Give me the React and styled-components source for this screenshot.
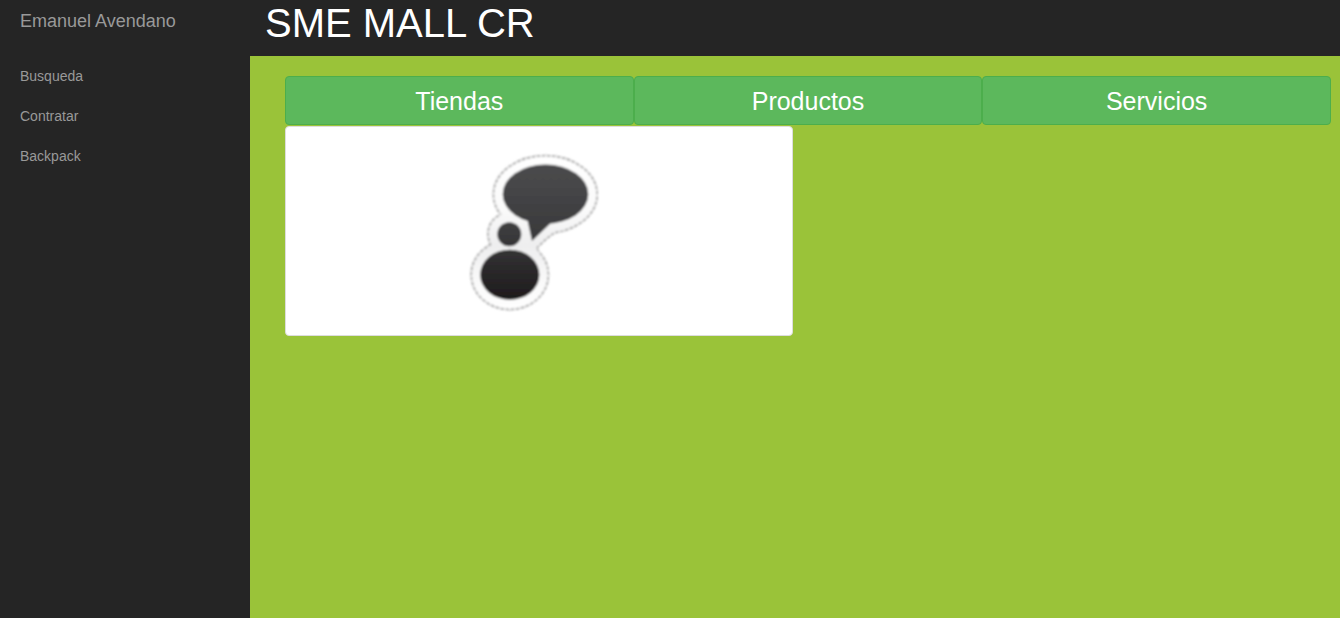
import React from "react";
import styled, { createGlobalStyle } from "styled-components";

const GlobalStyle = createGlobalStyle`
  *, *::before, *::after { box-sizing: border-box; }
  body {
    margin: 0;
    background: #9ac339;
    font-family: "Liberation Sans", Arial, sans-serif;
    font-size: 14px;
    line-height: 20px;
  }
`;

const Layout = styled.div`
  display: flex;
  min-height: 100vh;
`;

const Sidebar = styled.nav`
  flex: 0 0 250px;
  background: #252525;
`;

const SidebarLink = styled.a`
  display: block;
  padding-left: 20px;
  line-height: 40px;
  color: #999;
  text-decoration: none;
`;

const Brand = styled(SidebarLink)`
  height: 56px;
  font-size: 18px;
  line-height: 42px;
`;

const Menu = styled.ul`
  margin: 0;
  padding: 0;
  list-style: none;
`;

const Main = styled.div`
  flex: 1;
  min-width: 0;
`;

const Header = styled.header`
  height: 56px;
  padding: 0 15px;
  background: #252525;
`;

const Title = styled.h1`
  margin: 0;
  color: #fff;
  font-size: 40px;
  font-weight: 400;
  line-height: 46px;
`;

const Content = styled.main`
  padding: 20px 9px 20px 35px;
`;

const Categories = styled.div`
  display: grid;
  grid-template-columns: repeat(3, 1fr);
`;

const CategoryButton = styled.button`
  height: 49px;
  padding: 0 12px;
  border: 1px solid #4cae4c;
  border-radius: 4px;
  background: #5cb85c;
  color: #fff;
  font-family: inherit;
  font-size: 25px;
  line-height: 36px;
  cursor: pointer;
`;

const Stores = styled.div`
  display: grid;
  grid-template-columns: repeat(2, 1fr);
  column-gap: 30px;
  padding-top: 1px;
`;

const Thumbnail = styled.a`
  display: flex;
  justify-content: center;
  padding: 4px;
  border: 1px solid #ddd;
  border-radius: 4px;
  background: #fff;
`;

const StoreLogo = styled.svg`
  display: block;
  width: 178px;
  height: 200px;
`;

const outline = (
  <>
    <ellipse cx="95.3" cy="63.5" rx="51" ry="38" />
    <circle cx="59.3" cy="103" r="20.5" />
    <ellipse cx="59.8" cy="143.7" rx="37.8" ry="34" />
    <path d="M51 80L109 99C100 102 93 110 85.5 117L88 121L60 126Z" />
  </>
);

function SpeakerLogo() {
  return (
    <StoreLogo viewBox="0 0 178 200" role="img" aria-label="Logo">
      <defs>
        <linearGradient id="ink" gradientUnits="userSpaceOnUse" x1="0" y1="34" x2="0" y2="168">
          <stop offset="0" stopColor="#4b4b4d" />
          <stop offset="0.5" stopColor="#3b3b3d" />
          <stop offset="1" stopColor="#1e1b1c" />
        </linearGradient>
        <linearGradient id="paper" gradientUnits="userSpaceOnUse" x1="0" y1="24" x2="0" y2="180">
          <stop offset="0" stopColor="#fff" />
          <stop offset="0.35" stopColor="#fafafa" />
          <stop offset="0.58" stopColor="#eeeeef" />
          <stop offset="0.8" stopColor="#f9f9f9" />
          <stop offset="1" stopColor="#fff" />
        </linearGradient>
        <filter id="soft" x="-10%" y="-10%" width="120%" height="120%">
          <feGaussianBlur stdDeviation="0.9" />
        </filter>
      </defs>
      <g filter="url(#soft)">
        <g fill="none" stroke="#a0a0a0" strokeWidth="3.4">{outline}</g>
        <g fill="none" stroke="#e2e2e2" strokeWidth="3.4" strokeDasharray="2.5 2.5">{outline}</g>
        <g fill="url(#paper)">{outline}</g>
        <g fill="url(#ink)">
          <ellipse cx="95.5" cy="63.2" rx="42.8" ry="29.6" />
          <path d="M77 87L82 110L102 91L96 82Z" />
          <circle cx="59.3" cy="103.3" r="12" />
          <ellipse cx="59.8" cy="143.7" rx="29.6" ry="25" />
        </g>
      </g>
    </StoreLogo>
  );
}

const links = ["Busqueda", "Contratar", "Backpack"];
const categories = ["Tiendas", "Productos", "Servicios"];

export default function App() {
  return (
    <>
      <GlobalStyle />
      <Layout>
        <Sidebar>
          <Brand href="#">Emanuel Avendano</Brand>
          <Menu>
            {links.map((label) => (
              <li key={label}>
                <SidebarLink href="#">{label}</SidebarLink>
              </li>
            ))}
          </Menu>
        </Sidebar>
        <Main>
          <Header>
            <Title>SME MALL CR</Title>
          </Header>
          <Content>
            <Categories>
              {categories.map((label) => (
                <CategoryButton key={label} type="button">{label}</CategoryButton>
              ))}
            </Categories>
            <Stores>
              <Thumbnail href="#">
                <SpeakerLogo />
              </Thumbnail>
            </Stores>
          </Content>
        </Main>
      </Layout>
    </>
  );
}
